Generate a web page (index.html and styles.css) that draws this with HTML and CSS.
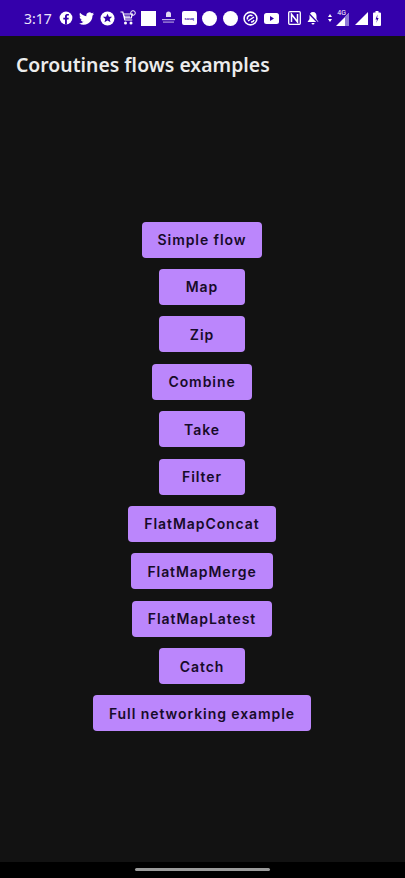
FILE: index.html
```html
<!DOCTYPE html>
<html lang="en">
<head>
<meta charset="utf-8">
<title>Coroutines flows examples</title>
<link rel="stylesheet" href="styles.css">
</head>
<body>
<div class="screen">
  <header class="status">
    <span class="time">3:17</span>
    <div class="cells">
      <span class="cell"><svg width="14" height="14" viewBox="0 0 14 14"><circle cx="7" cy="7" r="6.4" fill="#fff"/><path d="M7.9 13.4V8.6h1.6l.3-1.9H7.9V5.6c0-.6.3-1 1-1h1V3c-1.800-.3-3.200 0-3.700 1.300-.2.500-.2 1-.2 2.400H4.300v1.900H6v4.800z" fill="#3400ab"/></svg></span>
      <span class="cell"><svg width="15" height="13" viewBox="0 0 24 20"><path d="M24 2.400c-.9.400-1.800.700-2.800.800 1-.6 1.800-1.600 2.200-2.700-1 .6-2 1-3.100 1.200A4.900 4.900 0 0 0 11.900 6.200C7.800 6 4.200 4 1.700.9.400 3.200 1 6.100 3.200 7.500c-.8 0-1.600-.2-2.200-.6 0 2.300 1.600 4.400 3.900 4.900-.7.200-1.500.2-2.200.1.600 2 2.400 3.400 4.600 3.400A9.900 9.900 0 0 1 0 17.800 14 14 0 0 0 21.500 5.400c1-.7 1.800-1.600 2.500-3z" fill="#fff"/></svg></span>
      <span class="cell"><svg width="15" height="15" viewBox="0 0 15 15"><circle cx="7.500" cy="7.500" r="7" fill="#fff"/><path d="M7.500 2.800l1.400 3h3.200l-2.400 2.200.8 3.300-3-1.800-3 1.800.8-3.300L2.900 5.800h3.200z" fill="#3400ab"/></svg></span>
      <span class="cell"><svg width="16" height="16" viewBox="0 0 16 16" fill="none" stroke="#fff"><path d="M.5 2h2.300l2 8h7.500M3.300 4h9l-1 4H4.500M5 5.500v2.500M7 5.500v2.500M9 5.500v2.500" stroke-width="1.200"/><circle cx="5.500" cy="13" r="1.500" fill="#fff" stroke="none"/><circle cx="11" cy="13" r="1.500" fill="#fff" stroke="none"/><circle cx="13" cy="3" r="2.300" stroke-width="1"/></svg></span>
      <span class="cell"><span class="square"></span></span>
      <span class="cell"><svg width="15" height="14" viewBox="0 0 15 14"><path d="M5 6V3a2.500 2.500 0 0 1 5 0v3z" fill="#fff" opacity=".85"/><rect x="1" y="8" width="13" height="1.200" fill="#fff" opacity=".7"/><rect x="2" y="10.500" width="11" height="1.200" fill="#fff" opacity=".6"/></svg></span>
      <span class="cell"><span class="souq">souq</span></span>
      <span class="cell"><span class="dot"></span></span>
      <span class="cell"><span class="dot"></span></span>
      <span class="cell"><svg width="15" height="15" viewBox="0 0 15 15" fill="none" stroke="#fff"><circle cx="7.500" cy="7.500" r="6.400" stroke-width="1.600"/><path d="M4.500 8.500a3.200 3.200 0 0 1 5-3.500M5 10l6-4M8 11a3 3 0 0 0 3-2" stroke-width="1.500"/></svg></span>
      <span class="cell"><svg width="15" height="11" viewBox="0 0 15 11"><rect width="15" height="11" rx="2.500" fill="#fff"/><path d="M6 3l4 2.500L6 8z" fill="#3400ab"/></svg></span>
    </div>
    <div class="tray">
      <svg width="13" height="14" viewBox="0 0 13 14" fill="none" stroke="#fff"><rect x=".7" y=".7" width="11.600" height="12.600" rx="1" stroke-width="1.300"/><path d="M3.500 11V3.200l6 7.800V3" stroke-width="1.500"/></svg>
      <svg width="14" height="14" viewBox="0 0 14 14"><path d="M7 1C4.500 1 3.500 3 3.500 5v3L1.500 11h11l-2-3V5C10.500 3 9.500 1 7 1zM5.500 12h3a1.500 1.500 0 0 1-3 0z" fill="#fff"/><path d="M1.500 1l11 11.500" stroke="#3400ab" stroke-width="1.300"/></svg>
      <span class="net">
        <svg width="4" height="8" viewBox="0 0 4 8"><path d="M2 0l2 3H0zM2 8L0 5h4z" fill="#fff"/></svg>
        <svg width="15" height="15" viewBox="0 0 15 15"><path d="M15 2v13H2z" fill="#fff"/><path d="M11 6v9h4V2z" fill="#8f7ad6"/></svg>
        <span class="four">4G</span>
      </span>
      <svg width="13" height="13" viewBox="0 0 13 13"><path d="M13 0v13H0z" fill="#fff"/></svg>
      <svg width="8" height="15" viewBox="0 0 8 15"><path d="M2.500 0h3v1.500H7a1 1 0 0 1 1 1V14a1 1 0 0 1-1 1H1a1 1 0 0 1-1-1V2.500a1 1 0 0 1 1-1h1.500z" fill="#fff"/><path d="M4.500 3.500L2.500 8.500h1.500L3.300 12 5.600 7H4.200z" fill="#3400ab"/></svg>
    </div>
  </header>
  <div class="appbar"><h1 class="title">Coroutines flows examples</h1></div>
  <main class="list">
    <button class="btn">Simple flow</button>
    <button class="btn">Map</button>
    <button class="btn">Zip</button>
    <button class="btn">Combine</button>
    <button class="btn">Take</button>
    <button class="btn">Filter</button>
    <button class="btn">FlatMapConcat</button>
    <button class="btn">FlatMapMerge</button>
    <button class="btn">FlatMapLatest</button>
    <button class="btn">Catch</button>
    <button class="btn">Full networking example</button>
  </main>
  <footer class="nav"><span class="handle"></span></footer>
</div>
</body>
</html>
```
FILE: styles.css
```css
* { box-sizing: border-box; }
html, body { margin: 0; height: 100%; }
body { background: #121212; font-family: Inter, "Liberation Sans", sans-serif; }
.screen { width: 405px; height: 878px; display: flex; flex-direction: column; overflow: hidden; background: #121212; }
.status { height: 36px; flex: none; background: #3400ab; display: flex; align-items: center; padding: 0 24px; color: #fff; }
.time { font-family: "Noto Sans", sans-serif; font-size: 14px; width: 32px; color: #ece6fa; }
.cells { display: flex; align-items: center; }
.cell { width: 20.500px; height: 18px; display: flex; align-items: center; justify-content: center; }
.square { width: 15px; height: 15px; background: #fff; display: block; }
.souq { width: 15px; height: 14px; background: #fff; border-radius: 2px; color: #3400ab; font: 700 4px "Liberation Sans", sans-serif; display: flex; align-items: center; justify-content: center; }
.dot { width: 15px; height: 15px; border-radius: 50%; background: #fff; display: block; }
.tray { margin-left: auto; display: flex; align-items: center; gap: 5px; }
.net { display: flex; align-items: center; gap: 2px; position: relative; margin: 0 1px 0 3px; }
.four { position: absolute; right: 3px; top: -2px; font: 7px Roboto, sans-serif; color: #fff; }
.appbar { height: 56px; flex: none; display: flex; align-items: center; padding: 0 16px; }
.title { margin: 0; font: 600 19.400px "Noto Sans", sans-serif; color: #ececec; }
.list { flex: 1; display: flex; flex-direction: column; align-items: center; justify-content: center; gap: 11.400px; padding: 0 1px 1px 0; }
.btn { height: 36px; min-width: 86px; padding: 0 16px; border: 0; border-radius: 4px; background: #bb86fc; color: #170b29; font: 600 14px Inter, sans-serif; letter-spacing: .93px; }
.nav { height: 16px; flex: none; background: #000; display: flex; justify-content: center; padding-top: 6px; }
.handle { width: 135px; height: 3px; border-radius: 2px; background: #9a9a9a; display: block; }
```
